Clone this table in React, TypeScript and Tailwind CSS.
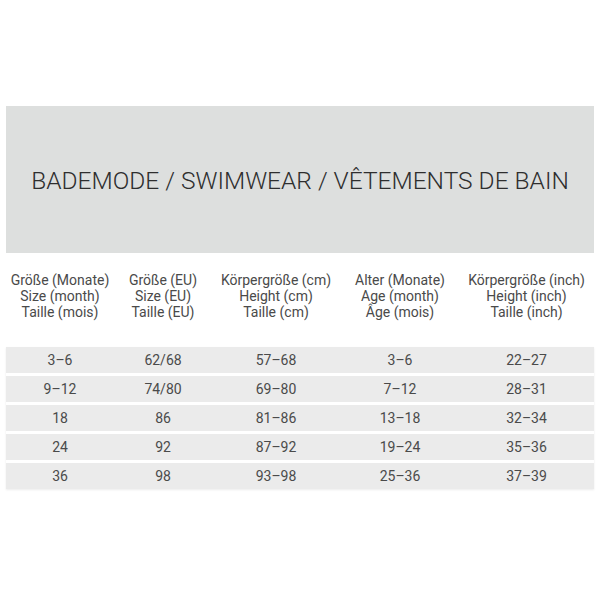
import React from "react";

const headers = [
  ["Größe (Monate)", "Size (month)", "Taille (mois)"],
  ["Größe (EU)", "Size (EU)", "Taille (EU)"],
  ["Körpergröße (cm)", "Height (cm)", "Taille (cm)"],
  ["Alter (Monate)", "Age (month)", "Âge (mois)"],
  ["Körpergröße (inch)", "Height (inch)", "Taille (inch)"],
];

const rows = [
  ["3–6", "62/68", "57–68", "3–6", "22–27"],
  ["9–12", "74/80", "69–80", "7–12", "28–31"],
  ["18", "86", "81–86", "13–18", "32–34"],
  ["24", "92", "87–92", "19–24", "35–36"],
  ["36", "98", "93–98", "25–36", "37–39"],
];

const cols = "grid grid-cols-[108px_98px_128px_120px_133px]";

export default function App() {
  return (
    <div
      className="w-[600px] h-[600px] bg-white overflow-hidden"
      style={{ fontFamily: "Roboto, 'Liberation Sans', sans-serif" }}
    >
      <div className="pt-[106px] px-[6px]">
        <div className="h-[147px] bg-[#dddfde] flex items-center justify-center">
          <h1 className="text-[24.5px] font-light text-[#2e2e2e] tracking-[0px] leading-none pt-[4px]">
            BADEMODE / SWIMWEAR / VÊTEMENTS DE BAIN
          </h1>
        </div>
        <div className={`${cols} mt-[19px] text-[14px] leading-[16px] text-[#4a4a4a]`}>
          {headers.map((h, i) => (
            <div key={i} className="flex flex-col items-center whitespace-nowrap">
              {h.map((l, j) => (
                <span key={j}>{l}</span>
              ))}
            </div>
          ))}
        </div>
        <div className="mt-[27px] flex flex-col gap-[3px] shadow-[0_1px_2px_rgba(0,0,0,0.08)]">
          {rows.map((r, i) => (
            <div key={i} className={`${cols} h-[26px] bg-[#ebebeb] items-center text-[14px] text-[#4a4a4a]`}>
              {r.map((c, j) => (
                <div key={j} className="text-center">
                  {c}
                </div>
              ))}
            </div>
          ))}
        </div>
      </div>
    </div>
  );
}
